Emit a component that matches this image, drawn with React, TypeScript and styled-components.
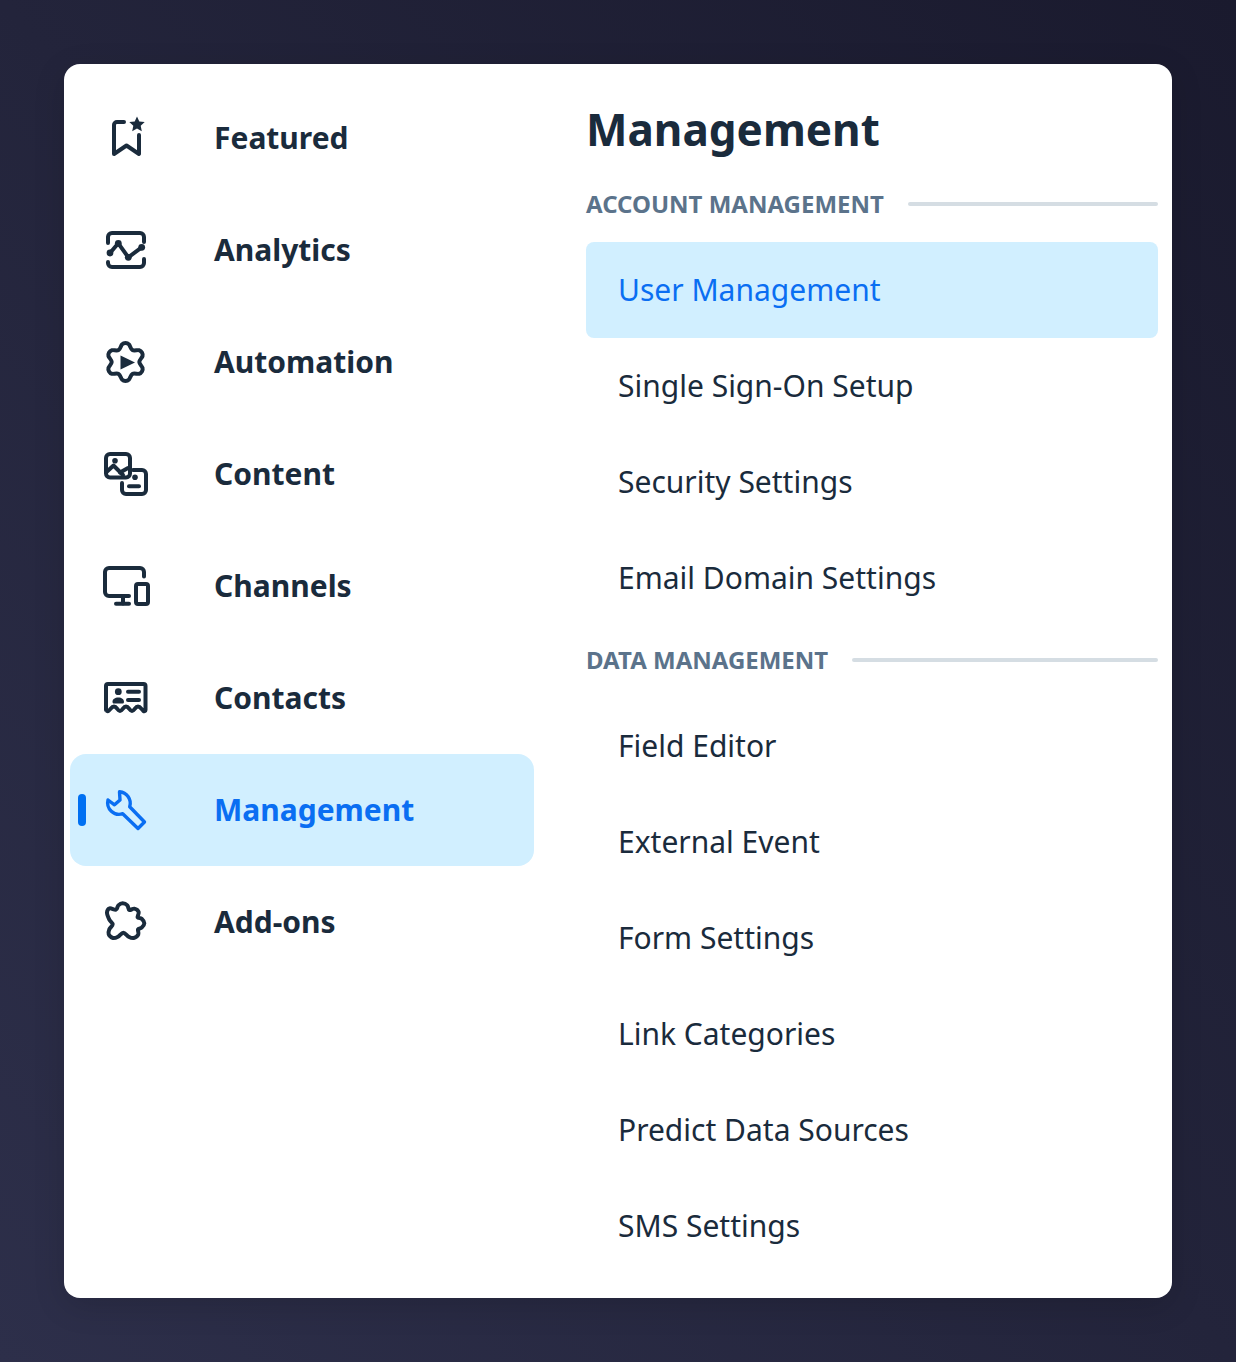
import React from "react";
import styled, { createGlobalStyle } from "styled-components";

const Global = createGlobalStyle`
  html, body { margin: 0; padding: 0; }
  body { font-family: "Noto Sans", "Open Sans", sans-serif; }
`;

const Page = styled.div`
  box-sizing: border-box;
  width: 1236px;
  height: 1362px;
  padding: 64px;
  background: linear-gradient(to bottom left, #1a1a2e 0%, #23243b 50%, #2d2f4a 100%);
`;

const Card = styled.div`
  box-sizing: border-box;
  height: 1234px;
  background: #fff;
  border-radius: 16px;
  box-shadow: 0 8px 32px rgba(0, 0, 0, 0.14);
  display: grid;
  grid-template-columns: 464px 1fr;
  column-gap: 52px;
  padding: 18px 14px 24px 6px;
`;

const Nav = styled.nav`
  display: flex;
  flex-direction: column;
`;

const NavItem = styled.div<{ $active?: boolean }>`
  position: relative;
  height: 112px;
  display: grid;
  grid-template-columns: 144px 1fr;
  align-items: center;
  border-radius: 16px;
  background: ${(p) => (p.$active ? "#d1efff" : "transparent")};
  color: ${(p) => (p.$active ? "#0a6ef2" : "#1a2b3c")};
`;

const Marker = styled.span`
  position: absolute;
  left: 8px;
  top: 40px;
  width: 8px;
  height: 32px;
  border-radius: 4px;
  background: #0070f2;
`;

const IconSlot = styled.span`
  display: block;
  margin-left: 32px;
  svg { display: block; width: 48px; height: 48px; }
`;

const NavLabel = styled.span`
  font-size: 30px;
  font-weight: 700;
  line-height: 40px;
`;

const Panel = styled.section`
  display: flex;
  flex-direction: column;
`;

const Title = styled.h1`
  margin: 0;
  height: 94px;
  display: flex;
  align-items: center;
  font-size: 44px;
  font-weight: 700;
  line-height: 56px;
  color: #1a2b3c;
`;

const SectionHead = styled.div`
  height: 40px;
  margin: 8px 0 18px;
  display: flex;
  align-items: center;
  gap: 24px;
  font-size: 24px;
  font-weight: 700;
  color: #5b738b;
  &::after {
    content: "";
    flex: 1;
    height: 4px;
    background: #d5dde3;
    border-radius: 2px;
  }
`;

const SectionLabel = styled.span`
  white-space: nowrap;
  padding-bottom: 2px;
`;

const Row = styled.div<{ $active?: boolean }>`
  box-sizing: border-box;
  height: 96px;
  display: flex;
  align-items: center;
  padding: 0 0 2px 32px;
  border-radius: 8px;
  font-size: 30px;
  background: ${(p) => (p.$active ? "#d1efff" : "transparent")};
  color: ${(p) => (p.$active ? "#0a6ef2" : "#1a2b3c")};
`;

const GroupGap = styled.div`
  height: 6px;
`;

const stroke = {
  fill: "none",
  stroke: "currentColor",
  strokeWidth: 4,
  strokeLinecap: "round" as const,
  strokeLinejoin: "round" as const,
};

// Closed Catmull-Rom spline through the given points, as an SVG path.
const spline = (pts: [number, number][]) => {
  const n = pts.length;
  let d = `M${pts[0][0].toFixed(2)} ${pts[0][1].toFixed(2)}`;
  for (let i = 0; i < n; i++) {
    const p0 = pts[(i - 1 + n) % n];
    const p1 = pts[i];
    const p2 = pts[(i + 1) % n];
    const p3 = pts[(i + 2) % n];
    const c1x = p1[0] + (p2[0] - p0[0]) / 6;
    const c1y = p1[1] + (p2[1] - p0[1]) / 6;
    const c2x = p2[0] - (p3[0] - p1[0]) / 6;
    const c2y = p2[1] - (p3[1] - p1[1]) / 6;
    d += `C${c1x.toFixed(2)} ${c1y.toFixed(2)} ${c2x.toFixed(2)} ${c2y.toFixed(2)} ${p2[0].toFixed(2)} ${p2[1].toFixed(2)}`;
  }
  return d + "Z";
};

const gearPoints = (): [number, number][] => {
  const out: [number, number][] = [];
  const polar = (deg: number, r: number): [number, number] => [
    23.5 + r * Math.cos((deg * Math.PI) / 180),
    24 + r * Math.sin((deg * Math.PI) / 180),
  ];
  for (let i = 0; i < 6; i++) {
    const a = -90 + i * 60;
    out.push(polar(a - 11, 18), polar(a, 19), polar(a + 11, 18), polar(a + 30, 13.8));
  }
  return out;
};

const puzzlePoints: [number, number][] = (
  [
    [55, 28], [68, 22], [82, 28], [88, 42], [103, 38], [116, 48], [113, 64], [125, 68],
    [133, 82], [125, 95], [114, 100], [115, 115], [101, 126], [86, 122], [70, 110], [54, 122],
    [39, 126], [26, 115], [28, 100], [38, 85], [28, 71], [21, 50], [29, 37], [48, 41],
  ] as [number, number][]
).map(([x, y]) => [x / 3 - 2, y / 3 - 2]);

const Featured = () => (
  <svg viewBox="0 0 48 48">
    <path {...stroke} d="M22 8h-7a3 3 0 0 0-3 3v29l12.500-8.500L37 40V21" />
    <path
      fill="currentColor"
      d="M35 2.500l2.300 5 5.400.6-4 3.700 1.100 5.400-4.800-2.700-4.800 2.700 1.100-5.400-4-3.700 5.400-.6z"
    />
  </svg>
);

const AnalyticsIcon = () => (
  <svg viewBox="0 0 48 48">
    <g {...stroke}>
      <path d="M6 17v-6a4 4 0 0 1 4-4h28a4 4 0 0 1 4 4v5" />
      <path d="M6 36v1a4 4 0 0 0 4 4h28a4 4 0 0 0 4-4v-4" />
      <path d="M8 27l8.300-9.700 10 14 13.400-10" />
    </g>
    <circle cx="8" cy="27" r="3.400" fill="currentColor" />
    <circle cx="16.300" cy="17.300" r="3.400" fill="currentColor" />
    <circle cx="26.300" cy="31.300" r="3.400" fill="currentColor" />
    <circle cx="39.700" cy="21.300" r="3.400" fill="currentColor" />
  </svg>
);

const AutomationIcon = () => (
  <svg viewBox="0 0 48 48">
    <path {...stroke} d={spline(gearPoints())} />
    <path fill="currentColor" d="M18.500 17.500L33 24.500 18.500 31.500z" />
  </svg>
);

const ContentIcon = () => (
  <svg viewBox="0 0 48 48">
    <g {...stroke}>
      <path d="M8 4h16a4 4 0 0 1 4 4v15.500a4 4 0 0 1-4 4H8a4 4 0 0 1-4-4V8a4 4 0 0 1 4-4z" />
      <path d="M4.500 22l7-6.500L21 25" />
      <path d="M18 22.500l8-4.500" />
      <path d="M31 20h9a4 4 0 0 1 4 4v16a4 4 0 0 1-4 4H24a4 4 0 0 1-4-4v-7" />
      <path d="M27 36.300h10" />
    </g>
    <circle cx="13" cy="10.700" r="2.800" fill="currentColor" />
    <circle cx="33" cy="27.300" r="2.800" fill="currentColor" />
  </svg>
);

const ChannelsIcon = () => (
  <svg viewBox="0 0 48 48">
    <g {...stroke}>
      <path d="M42 14.500V10a4 4 0 0 0-4-4H7a4 4 0 0 0-4 4v20a4 4 0 0 0 4 4h20" />
      <path d="M21 34v7.500" />
      <path d="M14 41.700h13" />
      <path d="M36 22h8a2 2 0 0 1 2 2v16a2 2 0 0 1-2 2h-8a2 2 0 0 1-2-2V24a2 2 0 0 1 2-2z" />
    </g>
  </svg>
);

const ContactsIcon = () => (
  <svg viewBox="0 0 48 48">
    <g {...stroke}>
      <path d="M4 36V12a2 2 0 0 1 2-2h35.500a2 2 0 0 1 2 2v24c0 1.300-1.300 1.500-2.200.8-2-1.600-2.800-4.300-5.300-4.300-3 0-3.500 4.500-6 4.500s-3-4.500-6-4.500-3.500 4.500-6 4.500-3-4.500-6-4.500c-2.500 0-3.300 2.700-5.300 4.300-.9.700-2.200.5-2.200-.8z" />
      <path d="M26 17.700h11" />
      <path d="M26 26h11" />
    </g>
    <circle cx="16.300" cy="17.700" r="3.400" fill="currentColor" />
    <path
      fill="currentColor"
      d="M10.500 28c0-2.800 2.500-4.500 5.800-4.500s5.700 1.700 5.700 4.500c0 .8-.6 1.500-1.400 1.500h-8.700c-.8 0-1.400-.7-1.400-1.500z"
    />
  </svg>
);

const ManagementIcon = () => (
  <svg viewBox="0 0 48 48">
    <path
      {...stroke}
      strokeWidth={3.4}
      d="M17.500 5.800A11.500 11.500 0 0 1 27.700 20.700L42.500 36 36 42.500 20.700 27.700A11.500 11.500 0 0 1 6 14L12.500 18.800 18 14z"
    />
  </svg>
);

const AddonsIcon = () => (
  <svg viewBox="0 0 48 48">
    <path {...stroke} d={spline(puzzlePoints)} />
  </svg>
);

const navItems = [
  { label: "Featured", Icon: Featured },
  { label: "Analytics", Icon: AnalyticsIcon },
  { label: "Automation", Icon: AutomationIcon },
  { label: "Content", Icon: ContentIcon },
  { label: "Channels", Icon: ChannelsIcon },
  { label: "Contacts", Icon: ContactsIcon },
  { label: "Management", Icon: ManagementIcon, active: true },
  { label: "Add-ons", Icon: AddonsIcon },
];

const account = ["User Management", "Single Sign-On Setup", "Security Settings", "Email Domain Settings"];
const data = ["Field Editor", "External Event", "Form Settings", "Link Categories", "Predict Data Sources", "SMS Settings"];

export default function App() {
  return (
    <Page>
      <Global />
      <Card>
        <Nav>
          {navItems.map(({ label, Icon, active }) => (
            <NavItem key={label} $active={active}>
              {active && <Marker />}
              <IconSlot>
                <Icon />
              </IconSlot>
              <NavLabel>{label}</NavLabel>
            </NavItem>
          ))}
        </Nav>
        <Panel>
          <Title>Management</Title>
          <SectionHead>
            <SectionLabel>ACCOUNT MANAGEMENT</SectionLabel>
          </SectionHead>
          {account.map((t, i) => (
            <Row key={t} $active={i === 0}>
              {t}
            </Row>
          ))}
          <GroupGap />
          <SectionHead>
            <SectionLabel>DATA MANAGEMENT</SectionLabel>
          </SectionHead>
          {data.map((t) => (
            <Row key={t}>{t}</Row>
          ))}
        </Panel>
      </Card>
    </Page>
  );
}
